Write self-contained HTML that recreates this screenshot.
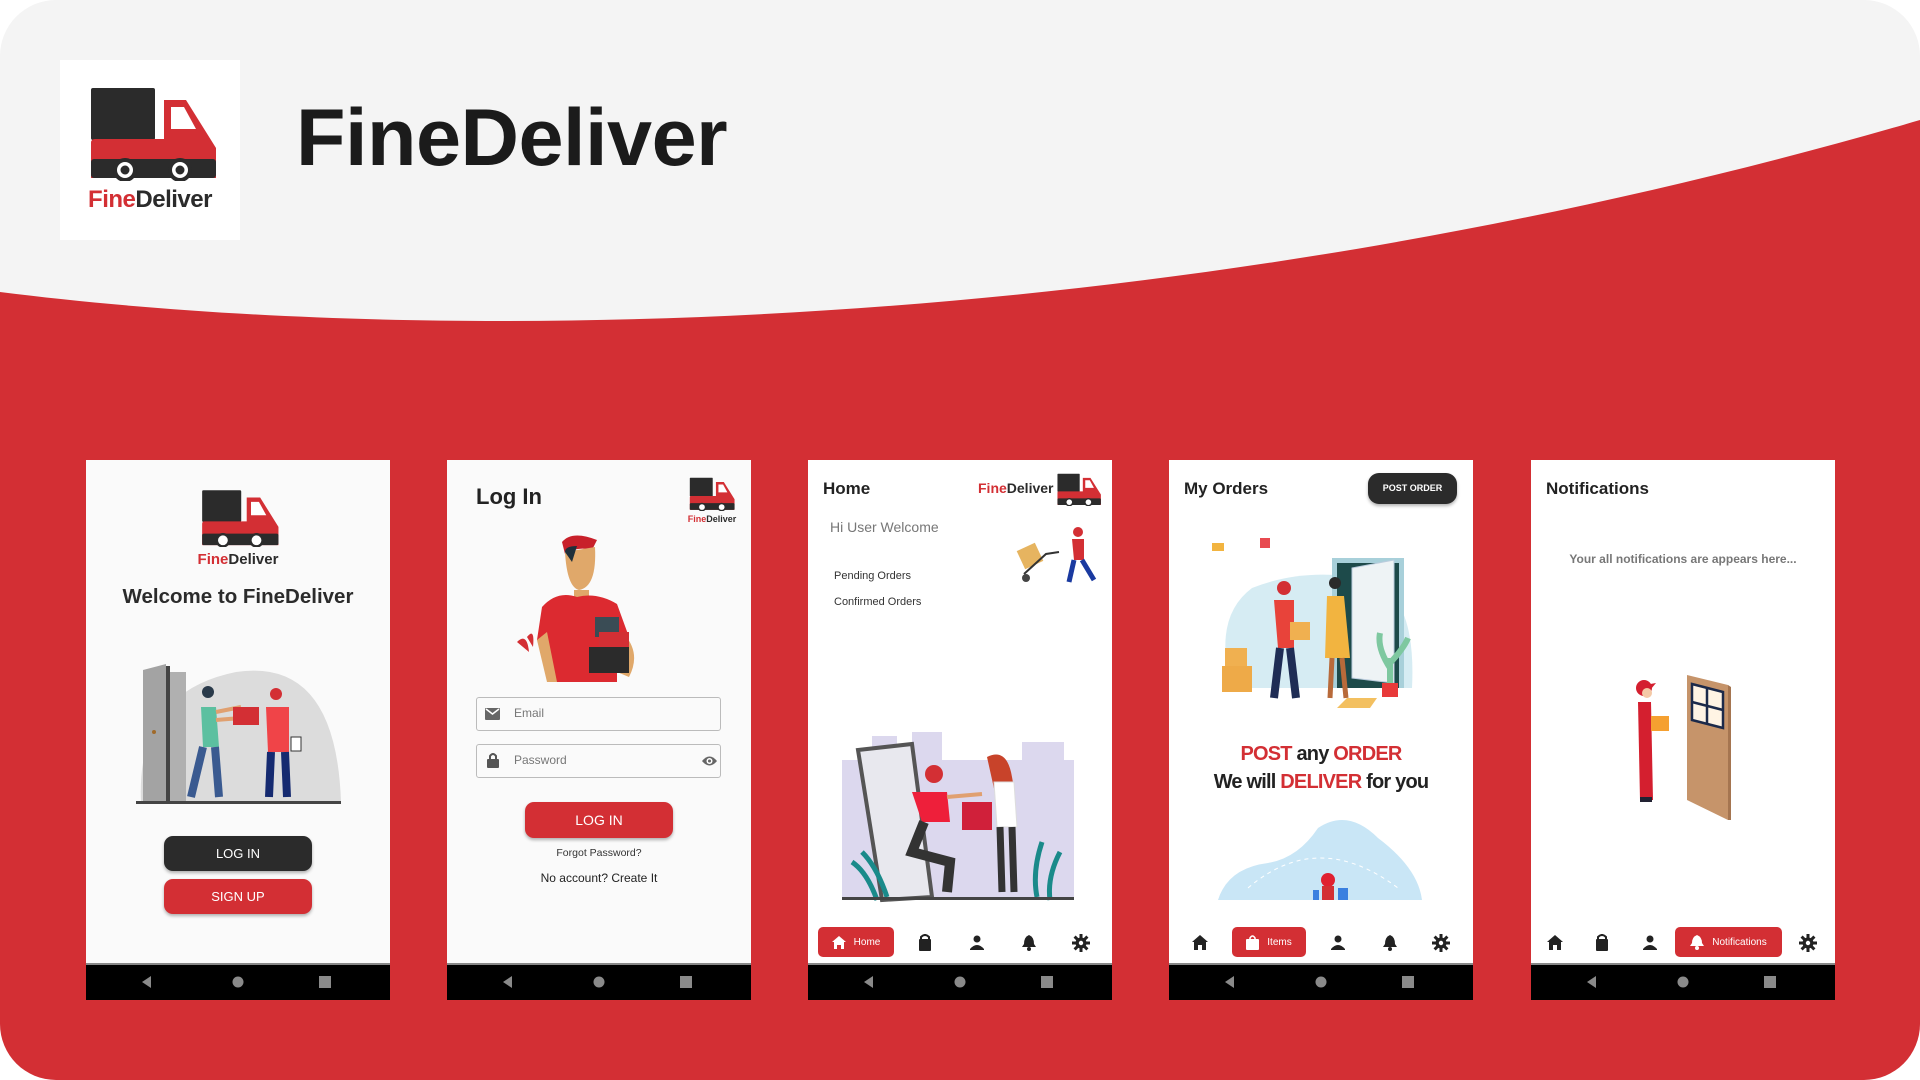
<!DOCTYPE html>
<html><head><meta charset="utf-8">
<style>
*{margin:0;padding:0;box-sizing:border-box}
body{width:1920px;height:1080px;background:#fff;overflow:hidden;font-family:"Liberation Sans",sans-serif;position:relative}
.card{position:absolute;left:0;top:0;width:1920px;height:1080px;border-radius:56px;overflow:hidden;background:#f4f4f4}
.abs{position:absolute}
.phone{position:absolute;top:460px;width:304px;height:540px;background:#fff;overflow:hidden}
.navbar{position:absolute;left:0;top:503px;width:304px;height:37px;background:#000;border-top:2px solid #888}
.tb{position:absolute;font-weight:bold;color:#222;font-size:17px}
.btn{position:absolute;border-radius:9px;color:#fff;font-size:13px;text-align:center;box-shadow:0 2px 3px rgba(0,0,0,.3)}
.pill{position:absolute;top:467px;height:30px;background:#d32f34;border-radius:5px;color:#fff;font-size:10px;display:flex;align-items:center;justify-content:center;gap:8px}
.ic{position:absolute;top:474px;width:18px;height:18px}
</style></head><body>
<div class="card">
<svg class="abs" style="left:0;top:0" width="1920" height="1080"><path d="M0 292 C 420 345, 1150 345, 1920 120 L1920 1080 L0 1080 Z" fill="#d32f34"/></svg>

<div class="abs" style="left:60px;top:60px;width:180px;height:180px;background:#fff"></div>
<svg class="abs" style="left:88px;top:86px" width="130" height="95" viewBox="0 0 130 95">
<rect x="3" y="2" width="64" height="52" rx="2" fill="#2b2b2b"/>
<path d="M76 14 H98 L128 62 V92 H3 V57 Q3 53 7 53 H76 Z" fill="#d32f34"/>
<path d="M83 21 H96 L108 43 H83 Z" fill="#fff"/>
<rect x="3" y="73" width="125" height="19" rx="3" fill="#2b2b2b"/>
<circle cx="37" cy="84" r="12" fill="#2b2b2b"/><circle cx="37" cy="84" r="8" fill="#fff"/><circle cx="37" cy="84" r="4.5" fill="#2b2b2b"/>
<circle cx="92" cy="84" r="12" fill="#2b2b2b"/><circle cx="92" cy="84" r="8" fill="#fff"/><circle cx="92" cy="84" r="4.5" fill="#2b2b2b"/>
</svg>
<div class="abs" style="left:60px;top:186px;width:180px;text-align:center;font-size:24px;font-weight:bold;letter-spacing:-0.5px;color:#2b2b2b"><span style="color:#d32f34">Fine</span>Deliver</div>
<div class="abs" style="left:296px;top:92px;font-size:81px;font-weight:bold;color:#1b1b1b;letter-spacing:-0.5px">FineDeliver</div>

<!-- PHONE 1 -->
<div class="phone" style="left:86px;background:#fafafa">
<svg class="abs" style="left:114px;top:29px" width="80" height="58" viewBox="0 0 130 95">
<rect x="3" y="2" width="64" height="52" rx="2" fill="#2b2b2b"/>
<path d="M76 14 H98 L128 62 V92 H3 V57 Q3 53 7 53 H76 Z" fill="#d32f34"/>
<path d="M83 21 H96 L108 43 H83 Z" fill="#fff"/>
<rect x="3" y="73" width="125" height="19" rx="3" fill="#2b2b2b"/>
<circle cx="37" cy="84" r="12" fill="#2b2b2b"/><circle cx="37" cy="84" r="8" fill="#fff"/>
<circle cx="92" cy="84" r="12" fill="#2b2b2b"/><circle cx="92" cy="84" r="8" fill="#fff"/>
</svg>
<div class="abs" style="left:0;top:91px;width:304px;text-align:center;font-size:15px;font-weight:bold;color:#2b2b2b"><span style="color:#d32f34">Fine</span>Deliver</div>
<div class="abs" style="left:0;top:125px;width:304px;text-align:center;font-size:20.5px;font-weight:bold;color:#2b2b2b">Welcome to FineDeliver</div>
<svg class="abs" style="left:45px;top:192px" width="220" height="156" viewBox="0 0 220 156">
<path d="M10 150 Q5 40 105 20 Q205 5 210 150 Z" fill="#dcdcdc"/>
<path d="M12 18 L35 12 V150 H12 Z" fill="#a3a3a3"/><rect x="35" y="14" width="4" height="136" fill="#444"/><rect x="39" y="20" width="16" height="130" fill="#b0b0b0"/>
<circle cx="23" cy="80" r="2" fill="#a06a2a"/>
<circle cx="77" cy="40" r="6" fill="#2a3a4a"/><path d="M70 55 H85 L88 95 H72 Z" fill="#5cc0a0"/><path d="M85 60 L110 55 M85 68 L110 66" stroke="#e0a070" stroke-width="4"/>
<path d="M72 95 L60 145 M84 95 L88 145" stroke="#3a5a90" stroke-width="8"/>
<rect x="102" y="55" width="26" height="18" fill="#d32f34"/>
<circle cx="145" cy="42" r="6" fill="#d32f34"/><path d="M135 55 H158 V100 H137 Z" fill="#f04448"/>
<path d="M140 100 L138 145 M154 100 L156 145" stroke="#152a70" stroke-width="8"/><rect x="160" y="85" width="10" height="14" fill="#fff" stroke="#333"/>
<rect x="5" y="149" width="205" height="3" fill="#444"/>
</svg>
<div class="btn" style="left:78px;top:376px;width:148px;height:35px;line-height:35px;background:#2b2b2b">LOG IN</div>
<div class="btn" style="left:78px;top:419px;width:148px;height:35px;line-height:35px;background:#d32f34">SIGN UP</div>
<div class="navbar"></div>
</div>

<!-- PHONE 2 -->
<div class="phone" style="left:447px;background:#fafafa">
<div class="tb" style="left:29px;top:24px;font-size:22px">Log In</div>
<svg class="abs" style="left:241px;top:17px" width="48" height="34" viewBox="0 0 130 95">
<rect x="3" y="2" width="64" height="52" rx="2" fill="#2b2b2b"/>
<path d="M76 14 H98 L128 62 V92 H3 V57 Q3 53 7 53 H76 Z" fill="#d32f34"/>
<path d="M83 21 H96 L108 43 H83 Z" fill="#fff"/>
<rect x="3" y="73" width="125" height="19" rx="3" fill="#2b2b2b"/>
<circle cx="37" cy="84" r="12" fill="#2b2b2b"/><circle cx="37" cy="84" r="8" fill="#fff"/>
<circle cx="92" cy="84" r="12" fill="#2b2b2b"/><circle cx="92" cy="84" r="8" fill="#fff"/>
</svg>
<div class="abs" style="left:232px;top:54px;width:66px;text-align:center;font-size:9px;font-weight:bold;color:#2b2b2b"><span style="color:#d32f34">Fine</span>Deliver</div>
<svg class="abs" style="left:70px;top:72px" width="150" height="150" viewBox="0 0 150 150">
<path d="M45 10 Q55 -2 80 8 L75 18 Q60 14 48 22 Z" fill="#c8202a"/>
<path d="M48 20 Q50 55 62 58 Q80 55 78 15 Z" fill="#e0a86a"/><path d="M48 20 Q48 14 60 14 L55 30 Z" fill="#1f2f3a"/>
<path d="M57 58 H72 V70 H57 Z" fill="#e0a86a"/>
<path d="M25 75 Q40 58 60 65 Q80 60 100 72 L112 105 L100 110 V150 H38 L30 110 L20 108 Z" fill="#dc2a30"/>
<path d="M20 108 L30 150 H40 L30 100 Z" fill="#e0a86a"/><path d="M105 100 Q125 120 112 145 L100 140 Z" fill="#e0a86a"/>
<rect x="78" y="85" width="24" height="20" fill="#3a4c55"/><rect x="82" y="100" width="30" height="18" fill="#d32f34"/><rect x="72" y="115" width="40" height="26" fill="#2b2b2b"/>
<path d="M0 110 Q10 100 12 120 Z M10 105 Q18 95 16 115 Z" fill="#d32f34"/>
</svg>
<div class="abs" style="left:29px;top:237px;width:245px;height:34px;border:1.5px solid #bbb;border-radius:3px"></div>
<svg class="abs" style="left:38px;top:248px" width="15" height="12"><rect width="15" height="12" rx="1" fill="#666"/><path d="M1 1 L7.5 6 L14 1" stroke="#fff" stroke-width="1.5" fill="none"/></svg>
<div class="abs" style="left:67px;top:246px;font-size:12px;color:#777">Email</div>
<div class="abs" style="left:29px;top:284px;width:245px;height:34px;border:1.5px solid #bbb;border-radius:3px"></div>
<svg class="abs" style="left:40px;top:292px" width="12" height="16"><path d="M3 7 V4 Q6 0 9 4 V7" stroke="#555" stroke-width="2" fill="none"/><rect y="7" width="12" height="9" rx="1" fill="#555"/></svg>
<div class="abs" style="left:67px;top:293px;font-size:12px;color:#777">Password</div>
<svg class="abs" style="left:254px;top:295px" width="17" height="12"><path d="M1 6 Q8.5 -3 16 6 Q8.5 15 1 6Z" fill="#666"/><circle cx="8.5" cy="6" r="3" fill="#fff"/><circle cx="8.5" cy="6" r="1.5" fill="#666"/></svg>
<div class="btn" style="left:78px;top:342px;width:148px;height:36px;line-height:36px;background:#d32f34;font-size:14px">LOG IN</div>
<div class="abs" style="left:0;top:387px;width:304px;text-align:center;font-size:10.5px;color:#333">Forgot Password?</div>
<div class="abs" style="left:0;top:411px;width:304px;text-align:center;font-size:12px;color:#222">No account? Create It</div>
<div class="navbar"></div>
</div>

<!-- PHONE 3 -->
<div class="phone" style="left:808px">
<div class="tb" style="left:15px;top:19px">Home</div>
<div class="abs" style="left:170px;top:20px;font-size:14px;font-weight:bold;color:#2b2b2b"><span style="color:#d32f34">Fine</span>Deliver</div>
<svg class="abs" style="left:248px;top:13px" width="46" height="33" viewBox="0 0 130 95">
<rect x="3" y="2" width="64" height="52" rx="2" fill="#2b2b2b"/>
<path d="M76 14 H98 L128 62 V92 H3 V57 Q3 53 7 53 H76 Z" fill="#d32f34"/>
<path d="M83 21 H96 L108 43 H83 Z" fill="#fff"/>
<rect x="3" y="73" width="125" height="19" rx="3" fill="#2b2b2b"/>
<circle cx="37" cy="84" r="12" fill="#2b2b2b"/><circle cx="37" cy="84" r="8" fill="#fff"/>
<circle cx="92" cy="84" r="12" fill="#2b2b2b"/><circle cx="92" cy="84" r="8" fill="#fff"/>
</svg>
<div class="abs" style="left:22px;top:59px;font-size:14px;color:#777">Hi User Welcome</div>
<svg class="abs" style="left:206px;top:64px" width="84" height="64" viewBox="0 0 84 64">
<rect x="6" y="22" width="20" height="20" fill="#e6b460" transform="rotate(-25 16 32)"/><path d="M10 50 L32 30 L45 28" stroke="#333" stroke-width="2" fill="none"/><circle cx="12" cy="54" r="4" fill="#444"/>
<circle cx="64" cy="8" r="5" fill="#d32f34"/><path d="M58 15 H70 V36 H60 Z" fill="#d32f34"/><path d="M60 36 L55 58 M68 36 L80 56" stroke="#1a3aa0" stroke-width="5"/>
</svg>
<div class="abs" style="left:26px;top:110px;font-size:11px;color:#333">Pending Orders</div>
<div class="abs" style="left:26px;top:136px;font-size:11px;color:#333">Confirmed Orders</div>
<svg class="abs" style="left:34px;top:272px" width="236" height="172" viewBox="0 0 236 172">
<rect x="0" y="28" width="232" height="140" fill="#dcd8ee"/><rect x="30" y="4" width="25" height="30" fill="#dcd8ee"/><rect x="70" y="0" width="30" height="30" fill="#dcd8ee"/><rect x="180" y="10" width="42" height="25" fill="#dcd8ee"/>
<path d="M16 18 L70 12 L90 165 L40 168 Z" fill="#e8e8ee" stroke="#555" stroke-width="4"/>
<path d="M20 120 Q35 135 45 165 M10 130 Q25 140 35 168" stroke="#1a8a8a" stroke-width="5" fill="none"/>
<path d="M200 110 Q190 140 195 165 M218 120 Q205 145 208 168" stroke="#1a8a8a" stroke-width="5" fill="none"/>
<circle cx="92" cy="42" r="9" fill="#d32f34"/><path d="M70 60 H105 L108 90 H80 Z" fill="#ee1f3a"/><path d="M82 90 L70 120 L108 130 L105 160" stroke="#333" stroke-width="10" fill="none"/>
<path d="M105 65 L140 62" stroke="#e0a070" stroke-width="4"/>
<rect x="120" y="70" width="30" height="28" fill="#d0203a"/>
<path d="M145 25 Q165 15 170 45 Q175 70 170 80 L155 70 Z" fill="#c8432a"/><path d="M152 50 H172 L175 95 H155 Z" fill="#fff" stroke="#ddd"/>
<path d="M158 95 L160 160 M170 95 L172 160" stroke="#333" stroke-width="7"/>
<rect x="0" y="165" width="232" height="3" fill="#444"/>
</svg>
<div class="pill" style="left:10px;width:76px"><svg width="14" height="13"><path d="M7 0 L14 6 H12 V13 H9 V9 H5 V13 H2 V6 H0Z" fill="#fff"/></svg>Home</div>
<svg class="ic" style="left:108px"><path d="M5 5 V3 Q9 -1 13 3 V5" stroke="#222" stroke-width="2" fill="none"/><rect x="3" y="5" width="12" height="12" rx="1" fill="#222"/></svg>
<svg class="ic" style="left:160px"><circle cx="9" cy="5" r="3.5" fill="#222"/><path d="M2 15 Q9 7 16 15 V16 H2Z" fill="#222"/></svg>
<svg class="ic" style="left:212px"><path d="M9 1 Q4 3 4 10 L2 13 H16 L14 10 Q14 3 9 1Z" fill="#222"/><circle cx="9" cy="15" r="2" fill="#222"/></svg>
<svg class="ic" style="left:264px" viewBox="0 0 18 18"><g stroke="#222" stroke-width="3"><path d="M9 0V18M0 9H18M2.6 2.6L15.4 15.4M15.4 2.6L2.6 15.4"/></g><circle cx="9" cy="9" r="5.5" fill="#222"/><circle cx="9" cy="9" r="2.2" fill="#fff"/></svg>
<div class="navbar"></div>
</div>

<!-- PHONE 4 -->
<div class="phone" style="left:1169px">
<div class="tb" style="left:15px;top:19px">My Orders</div>
<div class="abs" style="left:199px;top:13px;width:89px;height:31px;border-radius:11px;background:#2b2b2b;color:#fff;font-size:9px;font-weight:bold;text-align:center;line-height:31px;box-shadow:0 2px 3px rgba(0,0,0,.3)">POST ORDER</div>
<svg class="abs" style="left:43px;top:78px" width="216" height="170" viewBox="0 0 216 170">
<path d="M20 150 Q0 80 40 50 Q90 30 150 40 Q205 50 200 150 Z" fill="#d6ecf3"/>
<rect x="120" y="20" width="72" height="130" fill="#a8d0da"/><rect x="125" y="25" width="62" height="125" fill="#1d4a4a"/><path d="M140 30 L182 22 V145 L140 140Z" fill="#eef3f5" stroke="#bcd"/>
<circle cx="72" cy="50" r="7" fill="#d32f34"/><path d="M62 62 H82 V110 H66 Z" fill="#e8433a"/><path d="M68 110 L62 160 M78 110 L84 160" stroke="#1f2d55" stroke-width="8"/>
<rect x="78" y="84" width="20" height="18" fill="#f0b050"/>
<circle cx="123" cy="45" r="6" fill="#2a2a2a"/><path d="M115 58 H132 L138 120 H113 Z" fill="#f2b440"/><path d="M120 120 L118 160 M130 120 L134 160" stroke="#b86a3a" stroke-width="5"/>
<rect x="13" y="110" width="22" height="20" fill="#f0b050"/><rect x="10" y="128" width="30" height="26" fill="#eeaa48"/>
<path d="M178 150 V120 M178 130 Q165 110 168 95 M178 125 Q192 110 196 100" stroke="#7ec8a0" stroke-width="6" fill="none"/><rect x="170" y="145" width="16" height="14" fill="#e83a3a"/>
<rect x="0" y="5" width="12" height="8" fill="#f2b440"/><rect x="48" y="0" width="10" height="10" fill="#e84a50"/>
<path d="M135 160 H165 L158 170 H125Z" fill="#f3c060"/>
</svg>
<div class="abs" style="left:0;top:283px;width:304px;text-align:center;font-size:20px;font-weight:bold;color:#222;letter-spacing:-0.8px"><span style="color:#d32f34">POST</span> any <span style="color:#d32f34">ORDER</span></div>
<div class="abs" style="left:0;top:311px;width:304px;text-align:center;font-size:20px;font-weight:bold;color:#222;letter-spacing:-0.8px">We will <span style="color:#d32f34">DELIVER</span> for you</div>
<svg class="abs" style="left:49px;top:348px" width="204" height="92" viewBox="0 0 204 92">
<path d="M0 92 Q10 60 50 55 Q80 50 100 20 Q130 0 160 30 Q200 60 204 92Z" fill="#c9e6f6"/>
<path d="M30 80 Q100 20 180 80" stroke="#fff" stroke-dasharray="4 4" fill="none"/>
<circle cx="110" cy="72" r="7" fill="#e02030"/><rect x="104" y="78" width="12" height="14" fill="#d32f34"/><rect x="120" y="80" width="10" height="12" fill="#3a80e0"/><rect x="95" y="82" width="6" height="10" fill="#3a80e0"/>
</svg>
<svg class="ic" style="left:22px"><path d="M9 1 L17 8 H15 V16 H11 V11 H7 V16 H3 V8 H1Z" fill="#222"/></svg>
<div class="pill" style="left:63px;width:74px"><svg width="13" height="15"><path d="M4 5 V3 Q6.5 -1 9 3 V5" stroke="#fff" stroke-width="1.6" fill="none"/><rect y="4" width="13" height="11" rx="1" fill="#fff"/></svg>Items</div>
<svg class="ic" style="left:160px"><circle cx="9" cy="5" r="3.5" fill="#222"/><path d="M2 15 Q9 7 16 15 V16 H2Z" fill="#222"/></svg>
<svg class="ic" style="left:212px"><path d="M9 1 Q4 3 4 10 L2 13 H16 L14 10 Q14 3 9 1Z" fill="#222"/><circle cx="9" cy="15" r="2" fill="#222"/></svg>
<svg class="ic" style="left:263px" viewBox="0 0 18 18"><g stroke="#222" stroke-width="3"><path d="M9 0V18M0 9H18M2.6 2.6L15.4 15.4M15.4 2.6L2.6 15.4"/></g><circle cx="9" cy="9" r="5.5" fill="#222"/><circle cx="9" cy="9" r="2.2" fill="#fff"/></svg>
<div class="navbar"></div>
</div>

<!-- PHONE 5 -->
<div class="phone" style="left:1531px">
<div class="tb" style="left:15px;top:19px">Notifications</div>
<div class="abs" style="left:0;top:92px;width:304px;text-align:center;font-size:12px;font-weight:bold;color:#777">Your all notifications are appears here...</div>
<svg class="abs" style="left:100px;top:210px" width="110" height="150" viewBox="0 0 110 150">
<circle cx="13" cy="18" r="8" fill="#d41f2f"/><path d="M14 15 L25 13 L20 19Z" fill="#d41f2f"/><circle cx="16" cy="23" r="5" fill="#f4c9a6"/>
<path d="M7 32 H20 L22 130 H9 Z" fill="#d41f2f"/><rect x="20" y="46" width="18" height="15" fill="#f5a030"/><rect x="9" y="127" width="12" height="5" fill="#223"/>
<path d="M56 5 L97 15 V150 L56 130 Z" fill="#c6946a"/><path d="M97 15 L100 17 V152 L97 150Z" fill="#a57550"/>
<path d="M61 14 L92 22 V58 L61 50Z" fill="#fff4e4" stroke="#1c2a4a" stroke-width="2.5"/><path d="M76 18 V54 M61 32 L92 40" stroke="#1c2a4a" stroke-width="2.5"/>
</svg>
<svg class="ic" style="left:15px"><path d="M9 1 L17 8 H15 V16 H11 V11 H7 V16 H3 V8 H1Z" fill="#222"/></svg>
<svg class="ic" style="left:62px"><path d="M5 5 V3 Q9 -1 13 3 V5" stroke="#222" stroke-width="2" fill="none"/><rect x="3" y="5" width="12" height="12" rx="1" fill="#222"/></svg>
<svg class="ic" style="left:110px"><circle cx="9" cy="5" r="3.5" fill="#222"/><path d="M2 15 Q9 7 16 15 V16 H2Z" fill="#222"/></svg>
<div class="pill" style="left:144px;width:107px"><svg width="14" height="16"><path d="M7 1 Q2 3 2 9 L0 12 H14 L12 9 Q12 3 7 1Z" fill="#fff"/><circle cx="7" cy="14" r="2" fill="#fff"/></svg>Notifications</div>
<svg class="ic" style="left:268px" viewBox="0 0 18 18"><g stroke="#222" stroke-width="3"><path d="M9 0V18M0 9H18M2.6 2.6L15.4 15.4M15.4 2.6L2.6 15.4"/></g><circle cx="9" cy="9" r="5.5" fill="#222"/><circle cx="9" cy="9" r="2.2" fill="#fff"/></svg>
<div class="navbar"></div>
</div>
</div>

<svg class="abs" style="left:0;top:970px" width="1920" height="25">
<g fill="#8a8a8a">
<path d="M151 6 L151 18 L142 12Z"/><circle cx="238" cy="12" r="5.5"/><rect x="319" y="6" width="12" height="12"/>
<path d="M512 6 L512 18 L503 12Z"/><circle cx="599" cy="12" r="5.5"/><rect x="680" y="6" width="12" height="12"/>
<path d="M873 6 L873 18 L864 12Z"/><circle cx="960" cy="12" r="5.5"/><rect x="1041" y="6" width="12" height="12"/>
<path d="M1234 6 L1234 18 L1225 12Z"/><circle cx="1321" cy="12" r="5.5"/><rect x="1402" y="6" width="12" height="12"/>
<path d="M1596 6 L1596 18 L1587 12Z"/><circle cx="1683" cy="12" r="5.5"/><rect x="1764" y="6" width="12" height="12"/>
</g></svg>
</body></html>
